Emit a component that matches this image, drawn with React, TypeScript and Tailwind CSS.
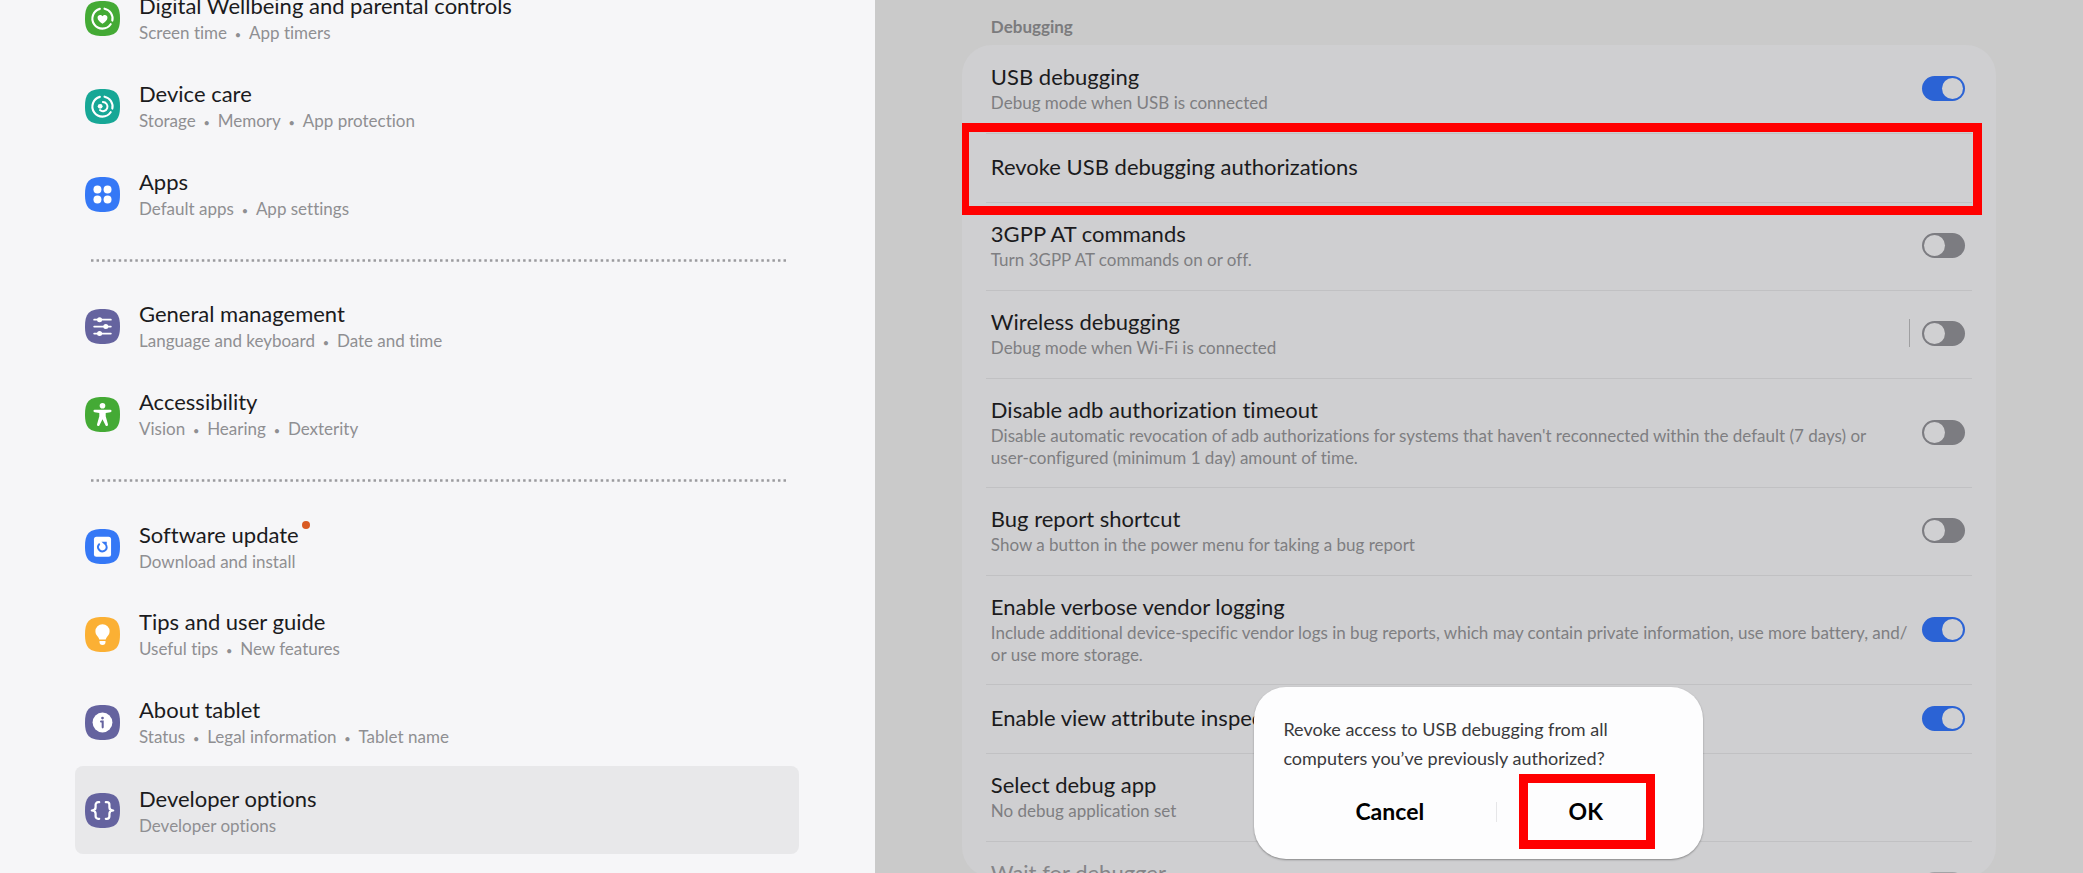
import { Fragment, type ReactNode } from "react";

type NavItem = {
  title: string;
  details: string[];
  tile: string;
  icon: ReactNode;
  badge?: boolean;
  active?: boolean;
};

type Setting = {
  id: string;
  title: string;
  lines?: string[];
  toggle?: "on" | "off";
  split?: boolean;
  marked?: boolean;
  disabled?: boolean;
};

const ring = (
  <g fill="none" stroke="#fff" strokeWidth="2.2" strokeLinecap="round">
    <path d="M26.4 23.9A10.3 10.3 0 1 1 15.3 8.1" />
    <path d="M20.1 7.9A10.3 10.3 0 0 1 28.1 20.1" />
  </g>
);

const wellbeingIcon = (
  <>
    {ring}
    <path
      fill="#fff"
      d="M18 23.4c-2.6-1.9-5.1-3.7-5.1-6.2 0-1.7 1.2-2.8 2.6-2.8 1 0 1.9.5 2.5 1.4.6-.9 1.5-1.4 2.5-1.4 1.4 0 2.6 1.1 2.6 2.8 0 2.5-2.5 4.3-5.1 6.2z"
    />
  </>
);

const deviceCareIcon = (
  <>
    {ring}
    <path
      d="M18.4 13.4a4.7 4.7 0 1 1-3 8.3"
      fill="none"
      stroke="#fff"
      strokeWidth="2"
      strokeLinecap="round"
    />
    <circle cx="15.6" cy="17.8" r="2.5" fill="#fff" />
  </>
);

const appsIcon = (
  <g fill="#fff">
    <circle cx="12.8" cy="12.8" r="4.1" />
    <circle cx="23.2" cy="12.8" r="4.1" />
    <circle cx="12.8" cy="23.2" r="4.1" />
    <circle cx="23.2" cy="23.2" r="4.1" />
  </g>
);

const managementIcon = (
  <g stroke="#fff" strokeWidth="1.8" strokeLinecap="round" fill="#fff">
    <path d="M9.4 11h17.2M9.4 18h17.2M9.4 25.2h17.2" />
    <circle cx="15" cy="11" r="1.7" />
    <circle cx="21.4" cy="18" r="1.7" />
    <circle cx="15" cy="25.2" r="1.7" />
  </g>
);

const accessibilityIcon = (
  <g fill="#fff">
    <circle cx="18" cy="9" r="2.9" />
    <path d="M9.9 13.2h16.2a1.2 1.2 0 0 1 0 2.4l-4.8.9v3.2l2.3 8.4a1.3 1.3 0 0 1-2.5.9L18 22.8 14.9 29a1.3 1.3 0 0 1-2.5-.9l2.3-8.4v-3.2l-4.8-.9a1.2 1.2 0 0 1 0-2.4z" />
  </g>
);

const updateIcon = (
  <>
    <rect x="9.2" y="8" width="17.6" height="20.5" rx="2.6" fill="#fff" />
    <path
      d="M14.6 15.6a4.4 4.4 0 1 0 7.4 1.6"
      fill="none"
      stroke="#3578f3"
      strokeWidth="2"
      strokeLinecap="round"
    />
    <path d="M17 13.2h5.4v5z" fill="#3578f3" />
  </>
);

const tipsIcon = (
  <g fill="#fff">
    <path d="M18 7.4a7.3 7.3 0 0 1 7.3 7.3c0 2.9-1.6 4.5-2.9 6-.7.8-.9 1.7-1.1 2.5h-6.6c-.2-.8-.4-1.7-1.1-2.5-1.3-1.5-2.9-3.1-2.9-6A7.3 7.3 0 0 1 18 7.4z" />
    <path d="M14.9 24.6h6.2v1a3.1 3.1 0 0 1-6.2 0z" />
  </g>
);

const aboutIcon = (
  <>
    <circle cx="18" cy="18" r="10.2" fill="#fff" />
    <circle cx="18" cy="13.4" r="1.4" fill="#65639f" />
    <path d="M16.5 17H18.2v6" fill="none" stroke="#65639f" strokeWidth="2.1" strokeLinecap="round" />
  </>
);

const developerIcon = (
  <g fill="none" stroke="#fff" strokeWidth="2.3" strokeLinecap="round" strokeLinejoin="round">
    <path d="M14.6 9.5h-1.1a2.6 2.6 0 0 0-2.6 2.6v2.6c0 1.8-1.2 3.3-3.9 3.3 2.7 0 3.9 1.5 3.9 3.3v2.6a2.6 2.6 0 0 0 2.6 2.6h1.1" />
    <path d="M21.4 9.5h1.1a2.6 2.6 0 0 1 2.6 2.6v2.6c0 1.8 1.2 3.3 3.9 3.3-2.7 0-3.9 1.5-3.9 3.3v2.6a2.6 2.6 0 0 1-2.6 2.6h-1.1" />
  </g>
);

const navGroups: NavItem[][] = [
  [
    {
      title: "Digital Wellbeing and parental controls",
      details: ["Screen time", "App timers"],
      tile: "text-[#44aa35]",
      icon: wellbeingIcon,
    },
    {
      title: "Device care",
      details: ["Storage", "Memory", "App protection"],
      tile: "text-[#17a796]",
      icon: deviceCareIcon,
    },
    {
      title: "Apps",
      details: ["Default apps", "App settings"],
      tile: "text-[#3578f6]",
      icon: appsIcon,
    },
  ],
  [
    {
      title: "General management",
      details: ["Language and keyboard", "Date and time"],
      tile: "text-[#65639f]",
      icon: managementIcon,
    },
    {
      title: "Accessibility",
      details: ["Vision", "Hearing", "Dexterity"],
      tile: "text-[#44aa35]",
      icon: accessibilityIcon,
    },
  ],
  [
    {
      title: "Software update",
      details: ["Download and install"],
      tile: "text-[#3578f6]",
      icon: updateIcon,
      badge: true,
    },
    {
      title: "Tips and user guide",
      details: ["Useful tips", "New features"],
      tile: "text-[#fbb034]",
      icon: tipsIcon,
    },
    {
      title: "About tablet",
      details: ["Status", "Legal information", "Tablet name"],
      tile: "text-[#65639f]",
      icon: aboutIcon,
    },
    {
      title: "Developer options",
      details: ["Developer options"],
      tile: "text-[#65639f]",
      icon: developerIcon,
      active: true,
    },
  ],
];

const settings: Setting[] = [
  { id: "usb", title: "USB debugging", lines: ["Debug mode when USB is connected"], toggle: "on" },
  { id: "revoke", title: "Revoke USB debugging authorizations", marked: true },
  { id: "at", title: "3GPP AT commands", lines: ["Turn 3GPP AT commands on or off."], toggle: "off" },
  {
    id: "wireless",
    title: "Wireless debugging",
    lines: ["Debug mode when Wi-Fi is connected"],
    toggle: "off",
    split: true,
  },
  {
    id: "timeout",
    title: "Disable adb authorization timeout",
    lines: [
      "Disable automatic revocation of adb authorizations for systems that haven't reconnected within the default (7 days) or",
      "user-configured (minimum 1 day) amount of time.",
    ],
    toggle: "off",
  },
  {
    id: "bug",
    title: "Bug report shortcut",
    lines: ["Show a button in the power menu for taking a bug report"],
    toggle: "off",
  },
  {
    id: "verbose",
    title: "Enable verbose vendor logging",
    lines: [
      "Include additional device-specific vendor logs in bug reports, which may contain private information, use more battery, and/",
      "or use more storage.",
    ],
    toggle: "on",
  },
  { id: "inspect", title: "Enable view attribute inspection", toggle: "on" },
  { id: "select", title: "Select debug app", lines: ["No debug application set"] },
  { id: "wait", title: "Wait for debugger", lines: [""], toggle: "off", disabled: true },
];

function rowPadding(item: Setting) {
  if (!item.lines) return "pt-[19px] pb-[20px]";
  return item.lines.length > 1 ? "pt-[17px] pb-[18px]" : "pt-[17px] pb-[19px]";
}

function NavRow({ item }: { item: NavItem }) {
  return (
    <a
      href="#"
      aria-current={item.active ? "page" : undefined}
      className={`flex h-22 shrink-0 items-center gap-[19px] rounded-lg pl-[10px] ${item.active ? "bg-[#e8e8ea]" : ""}`}
    >
      <svg viewBox="0 0 36 36" className={`size-[35px] shrink-0 ${item.tile}`} aria-hidden="true">
        <path
          fill="currentColor"
          d="M18 0C31.5 0 36 4.5 36 18S31.5 36 18 36 0 31.5 0 18 4.5 0 18 0z"
        />
        {item.icon}
      </svg>
      <span className="flex flex-col pt-[2px]">
        <span className="relative self-start text-[22px] leading-[30px] whitespace-nowrap text-[#1b1b1d]">
          {item.title}
          {item.badge && (
            <span className="absolute top-px -right-[11px] size-2 rounded-full bg-[#d95a22]" />
          )}
        </span>
        <span className="text-[17px] leading-[24px] whitespace-nowrap text-[#8f8f92]">
          {item.details.map((detail, i) => (
            <Fragment key={detail}>
              {i > 0 && <span className="inline-block w-[22px] text-center text-[11px]">•</span>}
              {detail}
            </Fragment>
          ))}
        </span>
      </span>
    </a>
  );
}

function Switch({ id, on, disabled }: { id: string; on: boolean; disabled?: boolean }) {
  return (
    <input
      id={id}
      type="checkbox"
      role="switch"
      defaultChecked={on}
      disabled={disabled}
      className="h-[25px] w-[43px] shrink-0 appearance-none rounded-full bg-[#7c7c81] p-[2px] before:block before:size-[21px] before:rounded-full before:bg-[#d0d0d2] checked:bg-[#2b63d5] checked:before:ml-[18px] disabled:bg-[#a3a3a6]"
    />
  );
}

function SettingRow({ item }: { item: Setting }) {
  const Tag = item.toggle ? "label" : "button";
  return (
    <li className="relative px-6 not-first:before:absolute not-first:before:inset-x-6 not-first:before:top-0 not-first:before:h-px not-first:before:bg-[#c1c1c3]">
      <Tag
        htmlFor={item.toggle ? item.id : undefined}
        className={`flex w-full items-center justify-between gap-3 pr-[7px] pl-[5px] text-left ${rowPadding(item)}`}
      >
        <span className="flex flex-col">
          <span
            className={`text-[22px] leading-[30px] whitespace-nowrap ${item.disabled ? "text-[#858588]" : "text-[#1b1b1d]"}`}
          >
            {item.title}
          </span>
          {item.lines?.map((line) => (
            <span
              key={line}
              className="min-h-[22px] text-[17px] leading-[22px] whitespace-nowrap text-[#7e7e81]"
            >
              {line}
            </span>
          ))}
        </span>
        {item.toggle && (
          <span className="flex items-center gap-3">
            {item.split && <span className="h-7 w-px bg-[#9f9fa1]" />}
            <Switch id={item.id} on={item.toggle === "on"} disabled={item.disabled} />
          </span>
        )}
      </Tag>
      {item.marked && (
        <span className="pointer-events-none absolute -top-[10px] right-[14px] -bottom-[13px] -left-[2px] z-10 border-[9px] border-[#ff0000]" />
      )}
    </li>
  );
}

function RevokeDialog() {
  return (
    <div
      role="dialog"
      aria-labelledby="revoke-message"
      className="w-[449px] rounded-[32px] bg-[#fdfdfe] px-[29px] pt-[28px] pb-[14px] shadow-[0_1px_2px_rgba(0,0,0,0.35)]"
    >
      <p id="revoke-message" className="text-[18px] leading-[29px] text-[#3a3a3c]">
        Revoke access to USB debugging from all
        <br />
        computers you’ve previously authorized?
      </p>
      <div className="flex items-center pt-[5px] text-[23px] leading-[28px] font-bold text-black">
        <button type="button" className="h-[67px] flex-6 pb-[2px]">
          Cancel
        </button>
        <span className="h-5 w-px bg-[#e6e6e8]" />
        <span className="relative flex-5">
          <button type="button" className="h-[67px] w-full pb-[2px]">
            OK
          </button>
          <span className="pointer-events-none absolute -top-[4px] right-[19px] -bottom-[4px] left-[22px] border-[9px] border-[#ff0000]" />
        </span>
      </div>
    </div>
  );
}

export default function App() {
  return (
    <div className="flex h-screen overflow-hidden font-['Lato',sans-serif] [font-variant-ligatures:none]">
      <nav className="w-[42%] shrink-0 overflow-hidden bg-[#f6f6f8] pr-[76px] pl-[75px]">
        <div className="-mt-[26px] flex flex-col">
          {navGroups.map((group, i) => (
            <Fragment key={group[0].title}>
              {i > 0 && (
                <div className="flex h-11 shrink-0 items-center pr-[11px] pl-[15px]">
                  <svg className="h-[3px] w-full" aria-hidden="true">
                    <line
                      x1="1"
                      y1="1.5"
                      x2="100%"
                      y2="1.5"
                      stroke="#9b9b9e"
                      strokeWidth="2.4"
                      strokeDasharray="2.5 3.04"
                    />
                  </svg>
                </div>
              )}
              {group.map((item) => (
                <NavRow key={item.title} item={item} />
              ))}
            </Fragment>
          ))}
        </div>
      </nav>

      <main className="relative flex min-w-0 flex-1 flex-col bg-[#cacaca] px-[87px]">
        <h2 className="shrink-0 pt-[15px] pb-[6px] pl-[29px] text-[17px] leading-[24px] font-bold text-[#7b7b7d]">
          Debugging
        </h2>
        <ul className="-mb-1 min-h-0 flex-1 overflow-hidden rounded-[30px] bg-[#cfcfd1]">
          {settings.map((item) => (
            <SettingRow key={item.id} item={item} />
          ))}
        </ul>
        <div className="absolute inset-x-0 bottom-[14px] flex justify-center">
          <RevokeDialog />
        </div>
      </main>
    </div>
  );
}
